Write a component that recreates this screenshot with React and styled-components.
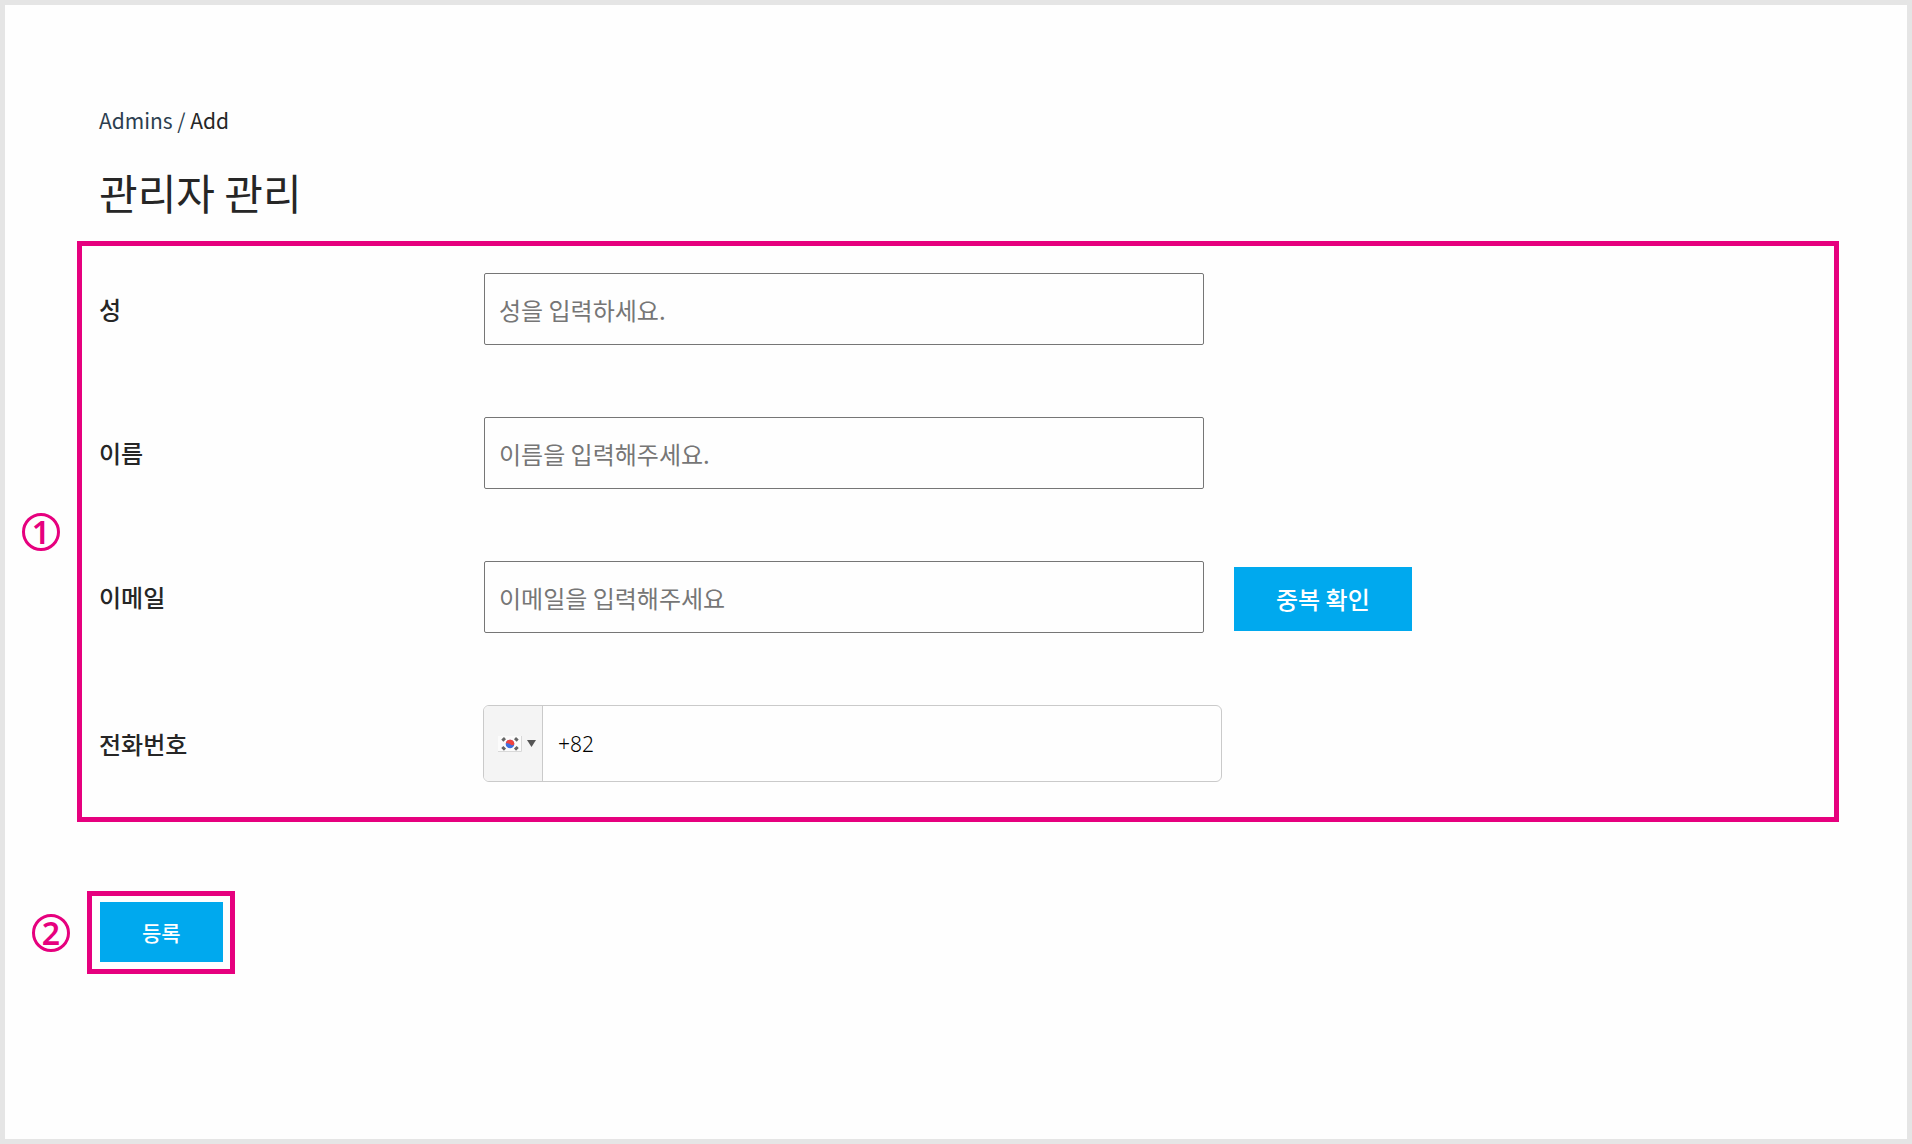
import { useState } from "react";
import styled, { createGlobalStyle } from "styled-components";

const GlobalStyle = createGlobalStyle`
  :root {
    --pink: #e6007e;
    --blue: #00a9ee;
    --ink: #262626;
    --navy: #2c3e50;
    --grey: #767676;
    --line: #cacaca;
  }

  *, *::before, *::after {
    box-sizing: border-box;
  }

  body {
    margin: 0;
    background-color: #fefefe;
    color: var(--ink);
    font-family: "Noto Sans CJK KR", "Noto Sans", sans-serif;
  }
`;

const Page = styled.main`
  min-height: 100vh;
  padding: 95px 68px 64px 0;
  border: 5px solid #e5e5e5;
`;

// HEADER STYLING

const Header = styled.header`
  padding-left: 94px;
`;

const Breadcrumb = styled.nav`
  font-size: 21px;
  line-height: 40px;
  color: var(--navy);
`;

const BreadcrumbLink = styled.a`
  color: var(--navy);
  text-decoration: none;
`;

const BreadcrumbCurrent = styled.span`
  color: var(--ink);
`;

const Title = styled.h1`
  margin: 22px 0 19px;
  font-size: 42px;
  font-weight: 400;
  line-height: 60px;
`;

// NUMBERED SECTIONS

const Step = styled.div`
  display: flex;
  align-items: center;
  padding-left: ${({ $indent }) => $indent || 0}px;
  margin-bottom: 69px;
`;

const Marker = styled.span`
  flex: none;
  display: flex;
  align-items: center;
  justify-content: center;
  width: 38px;
  height: 38px;
  margin: 0 17px;
  border: 3px solid var(--pink);
  border-radius: 50%;
  color: var(--pink);
  font-family: "Noto Sans", sans-serif;
  font-size: 32px;
  font-weight: 600;
  line-height: 32px;
`;

const Frame = styled.div`
  flex: ${({ $fill }) => ($fill ? "1" : "none")};
  padding: ${({ $fill }) => ($fill ? "27px 17px 35px" : "6px 7px 7px 8px")};
  border: 5px solid var(--pink);
`;

// FORM STYLING

const Fields = styled.div`
  display: grid;
  row-gap: 72px;
`;

const Row = styled.div`
  display: grid;
  grid-template-columns: 384px 1fr;
  align-items: center;
`;

const Label = styled.label`
  font-size: 24px;
  font-weight: 500;
  line-height: 36px;
`;

const Control = styled.div`
  display: flex;
  align-items: flex-end;
  gap: 29px;
`;

const TextInput = styled.input`
  width: 720px;
  height: 72px;
  margin: 0 1px;
  padding: 0 14px;
  border: 1px solid var(--grey);
  border-radius: 2px;
  background-color: transparent;
  color: var(--ink);
  font-family: inherit;
  font-size: 24px;

  &::placeholder {
    color: var(--grey);
    opacity: 1;
  }
`;

const PhoneBox = styled.div`
  display: flex;
  width: 739px;
  height: 77px;
  border: 1px solid var(--line);
  border-radius: 6px;
  overflow: hidden;
`;

const CountryButton = styled.button`
  display: flex;
  align-items: center;
  gap: 5px;
  width: 59px;
  padding: 0 0 0 14px;
  border: 0;
  border-right: 1px solid var(--line);
  background-color: #f4f4f4;
  cursor: pointer;
`;

const PhoneInput = styled.input`
  flex: 1;
  padding: 0 15px;
  border: 0;
  background-color: transparent;
  color: #000;
  font-family: "Noto Sans", "Open Sans", sans-serif;
  font-size: 21px;
  font-weight: 300;
`;

const Button = styled.button`
  display: block;
  height: ${({ $small }) => ($small ? "60px" : "64px")};
  margin-bottom: ${({ $small }) => ($small ? "0" : "2px")};
  padding: 0 42px;
  border: 0;
  background-color: var(--blue);
  color: #fff;
  font-family: inherit;
  font-size: ${({ $small }) => ($small ? "21px" : "24px")};
  font-weight: 500;
  line-height: 28px;
  cursor: pointer;
`;

function KoreaFlag() {
  return (
    <svg width="24" height="16" viewBox="0 0 24 16" aria-hidden="true">
      <rect width="24" height="16" fill="#fbfbfb" />
      <path d="M0 15.5h23.5V0" fill="none" stroke="#d8d8d8" />
      <g stroke="#666" strokeWidth="3">
        <path d="M4.3 4.6 7 2.2M17 2.2l2.7 2.4M4.3 11l2.7 2.6M17 13.6l2.7-2.6" />
      </g>
      <circle cx="12" cy="8" r="4.3" fill="#3d6fe0" />
      <path
        d="M7.8 7.2a4.3 4.3 0 0 1 8.5.6c-.3 2-2.9 2-4.2.5-1.3-1.3-3.300-1.200-4.300-1.100z"
        fill="#f0433f"
      />
    </svg>
  );
}

function Caret() {
  return (
    <svg width="9" height="7" viewBox="0 0 9 7" aria-hidden="true">
      <path d="M0 0h9L4.500 7z" fill="#555" />
    </svg>
  );
}

const textFields = [
  { id: "lastName", label: "성", placeholder: "성을 입력하세요." },
  { id: "firstName", label: "이름", placeholder: "이름을 입력해주세요." },
  {
    id: "email",
    label: "이메일",
    placeholder: "이메일을 입력해주세요",
    action: "중복 확인",
  },
];

function App() {
  const [values, setValues] = useState({
    lastName: "",
    firstName: "",
    email: "",
    phone: "+82",
  });

  const changeHandler = (e) =>
    setValues((prev) => ({ ...prev, [e.target.id]: e.target.value }));

  return (
    <>
      <GlobalStyle />
      <Page>
        <Header>
          <Breadcrumb>
            <BreadcrumbLink href="#admins">Admins</BreadcrumbLink> /{" "}
            <BreadcrumbCurrent>Add</BreadcrumbCurrent>
          </Breadcrumb>
          <Title>관리자 관리</Title>
        </Header>
        <form onSubmit={(e) => e.preventDefault()}>
          <Step>
            <Marker>1</Marker>
            <Frame $fill>
              <Fields>
                {textFields.map(({ id, label, placeholder, action }) => (
                  <Row key={id}>
                    <Label htmlFor={id}>{label}</Label>
                    <Control>
                      <TextInput
                        id={id}
                        placeholder={placeholder}
                        value={values[id]}
                        onChange={changeHandler}
                      />
                      {action && <Button type="button">{action}</Button>}
                    </Control>
                  </Row>
                ))}
                <Row>
                  <Label htmlFor="phone">전화번호</Label>
                  <PhoneBox>
                    <CountryButton type="button" aria-label="South Korea">
                      <KoreaFlag />
                      <Caret />
                    </CountryButton>
                    <PhoneInput
                      id="phone"
                      type="tel"
                      value={values.phone}
                      onChange={changeHandler}
                    />
                  </PhoneBox>
                </Row>
              </Fields>
            </Frame>
          </Step>
          <Step $indent={10}>
            <Marker>2</Marker>
            <Frame>
              <Button $small>등록</Button>
            </Frame>
          </Step>
        </form>
      </Page>
    </>
  );
}

export default App;
